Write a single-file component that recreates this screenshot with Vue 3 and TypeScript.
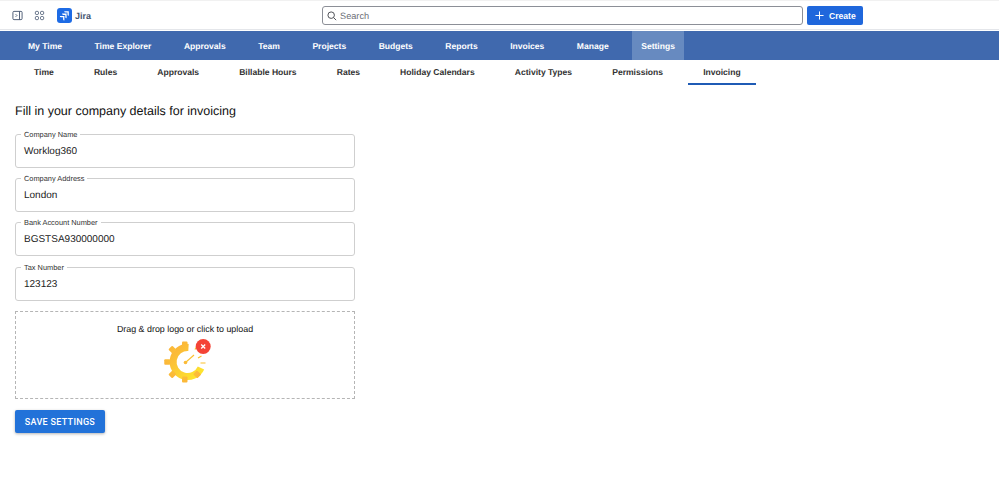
<template>
  <div class="page">
    <header class="topbar">
      <div class="topbar-left">
        <svg class="tool-icon" viewBox="0 0 12 12" width="11" height="11" fill="none" stroke="#44546f" stroke-width="1">
          <rect x="1" y="1.5" width="10" height="9" rx="1.2" />
          <line x1="8.2" y1="1.5" x2="8.2" y2="10.5" />
          <path d="M4 4.6 5.4 6 4 7.4" />
        </svg>
        <svg class="tool-icon" viewBox="0 0 12 12" width="11" height="11" fill="none" stroke="#44546f" stroke-width="1">
          <rect x="1.5" y="1.5" width="3.4" height="3.4" rx="1.2" />
          <rect x="7.1" y="1.5" width="3.4" height="3.4" rx="1.2" />
          <rect x="1.5" y="7.1" width="3.4" height="3.4" rx="1.2" />
          <rect x="7.1" y="7.1" width="3.4" height="3.4" rx="1.2" />
        </svg>
        <span class="brand">
          <svg viewBox="0 0 15 15" width="15" height="15">
            <rect width="15" height="15" rx="3" fill="#1d6be5" />
            <path d="M7.2 3.2h4.6v4.6a1.3 1.3 0 0 1-1.3-1.3V4.5H8.5a1.3 1.3 0 0 1-1.3-1.3Z" fill="#fff" />
            <path d="M5 5.6h4.6v4.6a1.3 1.3 0 0 1-1.3-1.3V6.9H6.3A1.3 1.3 0 0 1 5 5.6Z" fill="#fff" />
            <path d="M2.8 8h4.6v4.6a1.3 1.3 0 0 1-1.3-1.3V9.3H4.1A1.3 1.3 0 0 1 2.8 8Z" fill="#fff" />
          </svg>
          <span class="brand-name">Jira</span>
        </span>
      </div>
      <div class="search">
        <svg viewBox="0 0 12 12" width="10" height="10" fill="none" stroke="#505258" stroke-width="1.2">
          <circle cx="5" cy="5" r="3.9" />
          <line x1="7.9" y1="7.9" x2="11" y2="11" />
        </svg>
        <span>Search</span>
      </div>
      <button class="create" type="button">
        <svg viewBox="0 0 10 10" width="9" height="9" stroke="#fff" stroke-width="1.1">
          <line x1="5" y1="0.5" x2="5" y2="9.5" />
          <line x1="0.5" y1="5" x2="9.5" y2="5" />
        </svg>
        Create
      </button>
    </header>

    <nav class="mainnav">
      <a v-for="item in NAV" :key="item" class="mainnav-item" :class="{ active: item === 'Settings' }">{{ item }}</a>
    </nav>

    <nav class="subnav">
      <a v-for="tab in TABS" :key="tab" class="subnav-tab" :class="{ active: tab === 'Invoicing' }">{{ tab }}</a>
    </nav>

    <main class="content">
      <h1 class="title">Fill in your company details for invoicing</h1>

      <fieldset v-for="field in FIELDS" :key="field.label" class="field">
        <legend>{{ field.label }}</legend>
        <span class="field-value">{{ field.value }}</span>
      </fieldset>

      <div class="dropzone">
        <p>Drag &amp; drop logo or click to upload</p>
        <svg class="logo" viewBox="0 0 60 48" width="60" height="48">
          <defs>
            <linearGradient id="gearFill" gradientUnits="userSpaceOnUse" x1="8" y1="10" x2="38" y2="44">
              <stop offset="0" stop-color="#fbb03b" />
              <stop offset="1" stop-color="#fdeb2c" />
            </linearGradient>
          </defs>
          <path d="M26.5 10.4A14.6 14.6 0 1 0 39 31" fill="none" stroke="url(#gearFill)" stroke-width="7" />
          <rect
            v-for="angle in TEETH"
            :key="angle"
            x="20"
            y="4.5"
            width="5.5"
            height="6"
            rx="1"
            fill="url(#gearFill)"
            :transform="`rotate(${angle} 22.75 25)`"
          />
          <circle cx="23.5" cy="25.5" r="1.8" fill="#fbb93b" />
          <path d="M23.5 25.5 32 18" stroke="#fbc02d" stroke-width="1.1" />
          <path d="M33 12.5 35 9M36 21l3.5-2M38.5 26h5" stroke="#fbc02d" stroke-width="1.2" fill="none" />
          <circle cx="41.2" cy="9.5" r="7.5" fill="#f44336" />
          <path d="M39.2 7.5l4 4M43.2 7.5l-4 4" stroke="#fff" stroke-width="1.3" />
        </svg>
      </div>

      <button class="save" type="button">SAVE SETTINGS</button>
    </main>
  </div>
</template>

<script setup lang="ts">
interface Field {
  label: string
  value: string
}

const NAV: string[] = [
  'My Time', 'Time Explorer', 'Approvals', 'Team', 'Projects',
  'Budgets', 'Reports', 'Invoices', 'Manage', 'Settings',
]

const TABS: string[] = [
  'Time', 'Rules', 'Approvals', 'Billable Hours', 'Rates',
  'Holiday Calendars', 'Activity Types', 'Permissions', 'Invoicing',
]

const FIELDS: Field[] = [
  { label: 'Company Name', value: 'Worklog360' },
  { label: 'Company Address', value: 'London' },
  { label: 'Bank Account Number', value: 'BGSTSA930000000' },
  { label: 'Tax Number', value: '123123' },
]

// Gear teeth, degrees clockwise from the top
const TEETH: number[] = [0, -45, -90, -135, 180, 135]
</script>

<style>
html,
body {
  margin: 0;
  background: #fff;
}
</style>

<style scoped>
.page {
  width: 999px;
  height: 486px;
  overflow: hidden;
  font-family: "Liberation Sans", Arial, sans-serif;
  text-rendering: geometricPrecision;
  color: #1d1d1d;
  background: #fff;
}

/* Top bar */
.topbar {
  display: flex;
  align-items: center;
  height: 30px;
  box-sizing: border-box;
  border-top: 1px solid #f1f1f1;
  border-bottom: 1px solid #e4e6ea;
  padding-top: 1px;
}

.topbar-left {
  display: flex;
  align-items: center;
  width: 322px;
  padding-left: 12px;
  box-sizing: border-box;
}

.tool-icon {
  margin-right: 11px;
}

.brand {
  display: flex;
  align-items: center;
  gap: 3px;
  margin-left: 1px;
}

.brand-name {
  font-size: 9px;
  font-weight: 700;
  color: #44546f;
}

.search {
  display: flex;
  align-items: center;
  gap: 3px;
  width: 481px;
  height: 19px;
  box-sizing: border-box;
  padding-left: 4px;
  border: 1px solid #8c8f97;
  border-radius: 3px;
  font-size: 9.2px;
  color: #6b6e76;
}

.create {
  display: flex;
  align-items: center;
  gap: 5px;
  width: 56px;
  height: 19px;
  margin-left: 4px;
  padding: 0 0 0 8px;
  border: none;
  border-radius: 2px;
  background: #1f67dc;
  color: #fff;
  font: 700 8.6px "Liberation Sans", Arial, sans-serif;
}

/* Main nav */
.mainnav {
  display: flex;
  height: 29px;
  margin-top: 1px;
  padding-left: 19px;
  gap: 14.5px;
  background: #4069ae;
}

.mainnav-item {
  display: flex;
  align-items: center;
  padding: 0 9px;
  font-size: 8.55px;
  font-weight: 700;
  color: #fff;
}

.mainnav-item.active {
  background: #678ac0;
}

/* Sub tabs */
.subnav {
  display: flex;
  height: 25px;
  padding-left: 19px;
  gap: 10.1px;
}

.subnav-tab {
  display: flex;
  align-items: center;
  box-sizing: border-box;
  padding: 0 15px;
  border-bottom: 2px solid transparent;
  font-size: 8.55px;
  font-weight: 700;
  color: #333;
}

.subnav-tab.active {
  border-bottom-color: #1f5bb5;
}

/* Form */
.content {
  width: 340px;
  padding-left: 15px;
}

.title {
  margin: 18px 0 10.5px;
  font-size: 12.5px;
  line-height: 16px;
  font-weight: 400;
  color: #111;
}

.field {
  display: block;
  height: 38px;
  box-sizing: border-box;
  margin: 0 0 6.4px;
  padding: 0 8px;
  border: 1px solid #cfcfcf;
  border-radius: 3px;
}

.field legend {
  padding: 0 3px;
  margin-left: -3px;
  font-size: 7.4px;
  line-height: 9px;
  color: #333;
}

.field-value {
  display: block;
  margin-top: 7px;
  font-size: 10px;
  line-height: 12px;
  color: #222;
}

.dropzone {
  display: flex;
  flex-direction: column;
  align-items: center;
  height: 88.5px;
  box-sizing: border-box;
  margin-top: 10px;
  padding-top: 12px;
  border: 1px dashed #b5b5b5;
  text-align: center;
}

.dropzone p {
  margin: 0;
  font-size: 8.9px;
  line-height: 11px;
  color: #111;
}

.logo {
  margin: 2px 0 0 13px;
}

.save {
  display: block;
  width: 90px;
  height: 23px;
  margin-top: 11px;
  padding: 0;
  border: none;
  border-radius: 2px;
  background: #2272d9;
  box-shadow: 0 1px 3px rgba(0, 0, 0, 0.3);
  color: #fff;
  font: 500 9px Roboto, "Liberation Sans", sans-serif;
  letter-spacing: 0.3px;
}
</style>
